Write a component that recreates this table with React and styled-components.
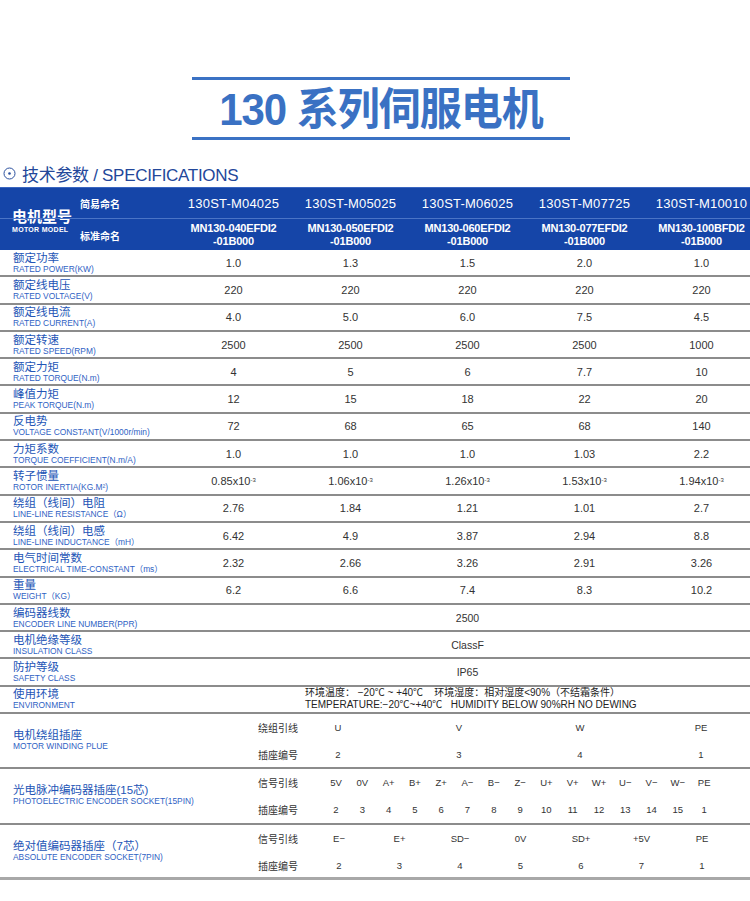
import React from 'react';
import styled, { createGlobalStyle } from 'styled-components';

const GlobalStyle = createGlobalStyle`
  html, body {
    margin: 0;
    padding: 0;
    background: #ffffff;
    overflow-x: hidden;
  }
  body {
    font-family: "Liberation Sans", "Noto Sans CJK SC", sans-serif;
    color: #333;
  }
`;

const models = [
  { short: '130ST-M04025', std: 'MN130-040EFDI2' },
  { short: '130ST-M05025', std: 'MN130-050EFDI2' },
  { short: '130ST-M06025', std: 'MN130-060EFDI2' },
  { short: '130ST-M07725', std: 'MN130-077EFDI2' },
  { short: '130ST-M10010', std: 'MN130-100BFDI2' },
];

const specs = [
  { cn: '额定功率', en: 'RATED POWER(KW)', v: ['1.0', '1.3', '1.5', '2.0', '1.0'] },
  { cn: '额定线电压', en: 'RATED VOLTAGE(V)', v: ['220', '220', '220', '220', '220'] },
  { cn: '额定线电流', en: 'RATED CURRENT(A)', v: ['4.0', '5.0', '6.0', '7.5', '4.5'] },
  { cn: '额定转速', en: 'RATED SPEED(RPM)', v: ['2500', '2500', '2500', '2500', '1000'] },
  { cn: '额定力矩', en: 'RATED TORQUE(N.m)', v: ['4', '5', '6', '7.7', '10'] },
  { cn: '峰值力矩', en: 'PEAK TORQUE(N.m)', v: ['12', '15', '18', '22', '20'] },
  { cn: '反电势', en: 'VOLTAGE CONSTANT(V/1000r/min)', v: ['72', '68', '65', '68', '140'] },
  { cn: '力矩系数', en: 'TORQUE COEFFICIENT(N.m/A)', v: ['1.0', '1.0', '1.0', '1.03', '2.2'] },
  { cn: '转子惯量', en: 'ROTOR INERTIA(KG.M²)', v: ['0.85', '1.06', '1.26', '1.53', '1.94'], exp: true },
  { cn: '绕组（线间）电阻', en: 'LINE-LINE RESISTANCE（Ω）', v: ['2.76', '1.84', '1.21', '1.01', '2.7'] },
  { cn: '绕组（线间）电感', en: 'LINE-LINE INDUCTANCE（mH）', v: ['6.42', '4.9', '3.87', '2.94', '8.8'] },
  { cn: '电气时间常数', en: 'ELECTRICAL TIME-CONSTANT（ms）', v: ['2.32', '2.66', '3.26', '2.91', '3.26'] },
  { cn: '重量', en: 'WEIGHT（KG）', v: ['6.2', '6.6', '7.4', '8.3', '10.2'] },
];

const merged = [
  { cn: '编码器线数', en: 'ENCODER LINE NUMBER(PPR)', v: '2500' },
  { cn: '电机绝缘等级', en: 'INSULATION CLASS', v: 'ClassF' },
  { cn: '防护等级', en: 'SAFETY CLASS', v: 'IP65' },
];

const sockets = [
  {
    cn: '电机绕组插座',
    en: 'MOTOR WINDING PLUE',
    sig: ['U', 'V', 'W', 'PE'],
    pin: ['2', '3', '4', '1'],
    pad: 13, w: 40, gap: 81,
  },
  {
    cn: '光电脉冲编码器插座(15芯)',
    en: 'PHOTOELECTRIC ENCODER SOCKET(15PIN)',
    sig: ['5V', '0V', 'A+', 'B+', 'Z+', 'A−', 'B−', 'Z−', 'U+', 'V+', 'W+', 'U−', 'V−', 'W−', 'PE'],
    pin: ['2', '3', '4', '5', '6', '7', '8', '9', '10', '11', '12', '13', '14', '15', '1'],
    pad: 18, w: 26, gap: 0.3,
  },
  {
    cn: '绝对值编码器插座（7芯）',
    en: 'ABSOLUTE ENCODER SOCKET(7PIN)',
    sig: ['E−', 'E+', 'SD−', '0V', 'SD+', '+5V', 'PE'],
    pin: ['2', '3', '4', '5', '6', '7', '1'],
    pad: 9, w: 50, gap: 10.5,
  },
];

const App = () => {
  return (
    <Page>
      <GlobalStyle />
      <TitleBox>
        <Title>130 系列伺服电机</Title>
      </TitleBox>

      <SpecHeading>
        <svg width="13" height="13" viewBox="0 0 13 13">
          <circle cx="6.5" cy="6.5" r="5.5" fill="none" stroke="#2a4f9e" strokeWidth="1" />
          <circle cx="6.5" cy="6.5" r="1.3" fill="#2a4f9e" />
        </svg>
        技术参数 / SPECIFICATIONS
      </SpecHeading>

      <Table>
        <Header>
          <ModelCell>
            <ModelCn>电机型号</ModelCn>
            <ModelEn>MOTOR MODEL</ModelEn>
          </ModelCell>
          <NameLabel $row={1}>简易命名</NameLabel>
          <NameLabel $row={2}>标准命名</NameLabel>
          {models.map((m, i) => (
            <ShortName key={m.short} style={{ gridColumn: i + 3 }}>{m.short}</ShortName>
          ))}
          {models.map((m, i) => (
            <StdName key={m.std} style={{ gridColumn: i + 3 }}>
              {m.std}
              <br />
              -01B000
            </StdName>
          ))}
          <HeaderDivider />
        </Header>

        {specs.map((s) => (
          <Row key={s.cn}>
            <Label>
              <Cn>{s.cn}</Cn>
              <En>{s.en}</En>
            </Label>
            {s.v.map((v, i) => (
              <Cell key={i}>
                {v}
                {s.exp && (
                  <>
                    x10<Sup>-3</Sup>
                  </>
                )}
              </Cell>
            ))}
          </Row>
        ))}

        {merged.map((s) => (
          <Row key={s.cn}>
            <Label>
              <Cn>{s.cn}</Cn>
              <En>{s.en}</En>
            </Label>
            <SpanCell>{s.v}</SpanCell>
          </Row>
        ))}

        <Row>
          <Label>
            <Cn>使用环境</Cn>
            <En>ENVIRONMENT</En>
          </Label>
          <EnvCell>
            <div>环境温度： −20℃ ~ +40℃&nbsp;&nbsp;&nbsp;&nbsp;环境湿度：相对湿度&lt;90%（不结霜条件）</div>
            <div>TEMPERATURE:−20℃~+40℃&nbsp;&nbsp;&nbsp;HUMIDITY BELOW 90%RH NO DEWING</div>
          </EnvCell>
        </Row>

        {sockets.map((s, idx) => (
          <SocketBlock key={s.cn} $last={idx === sockets.length - 1}>
            <SocketLabel>
              <Cn>{s.cn}</Cn>
              <En>{s.en}</En>
            </SocketLabel>
            <SubLabels>
              <SubLabel>{idx === 0 ? '绕组引线' : '信号引线'}</SubLabel>
              <SubLabel>插座编号</SubLabel>
            </SubLabels>
            <div>
              <ValueRow $n={s.sig.length} $pad={s.pad} $w={s.w} $gap={s.gap}>
                {s.sig.map((v, i) => <Pin key={i}>{v}</Pin>)}
              </ValueRow>
              <ValueRow $n={s.pin.length} $pad={s.pad} $w={s.w} $gap={s.gap}>
                {s.pin.map((v, i) => <Pin key={i}>{v}</Pin>)}
              </ValueRow>
            </div>
          </SocketBlock>
        ))}
      </Table>
    </Page>
  );
};

export default App;

const Page = styled.div`
  width: 750px;
  overflow: hidden;
  padding-top: 77px;
  padding-bottom: 20px;
`;

const TitleBox = styled.div`
  width: 378px;
  margin: 0 0 0 192px;
  border-top: 3px solid #3b72c4;
  border-bottom: 3px solid #3b72c4;
  height: 57px;
  display: flex;
  align-items: center;
  justify-content: center;
`;

const Title = styled.h1`
  margin: 0;
  font-size: 42px;
  font-weight: bold;
  color: #3a71c3;
  letter-spacing: -1px;
  line-height: 1;
  padding-top: 3px;
  transform: scaleY(1.06);
`;

const SpecHeading = styled.div`
  display: flex;
  align-items: center;
  gap: 6px;
  margin: 22px 0 0 3px;
  height: 22px;
  font-size: 17px;
  color: #23479a;
  letter-spacing: -0.3px;
`;

const Table = styled.div`
  width: 760px;
  margin-top: 3px;
`;

const Header = styled.div`
  position: relative;
  display: grid;
  grid-template-columns: 78px 97px repeat(5, 117px);
  grid-template-rows: 31px 31px;
  background: #1545a8;
  border-top: 1px solid #3a66c0;
  color: #ffffff;
`;

const HeaderDivider = styled.div`
  position: absolute;
  left: 0;
  right: 0;
  top: 30px;
  height: 1px;
  background: #4a74c6;
`;

const ModelCell = styled.div`
  grid-column: 1;
  grid-row: 1 / span 2;
  display: flex;
  flex-direction: column;
  justify-content: center;
  padding-left: 12px;
  padding-top: 2px;
  white-space: nowrap;
`;

const ModelCn = styled.div`
  font-size: 15px;
  font-weight: bold;
  line-height: 17px;
`;

const ModelEn = styled.div`
  font-size: 7px;
  font-weight: bold;
  letter-spacing: 0.3px;
  margin-top: 1px;
`;

const NameLabel = styled.div`
  grid-column: 2;
  grid-row: ${(p) => p.$row};
  display: flex;
  align-items: center;
  padding-left: 2px;
  font-size: 10px;
  font-weight: bold;
  padding-top: ${(p) => (p.$row === 2 ? '2px' : '0')};
`;

const ShortName = styled.div`
  grid-row: 1;
  display: flex;
  align-items: center;
  justify-content: center;
  font-size: 13px;
  letter-spacing: 0.2px;
`;

const StdName = styled.div`
  grid-row: 2;
  display: flex;
  align-items: center;
  justify-content: center;
  text-align: center;
  font-size: 11px;
  font-weight: bold;
  line-height: 13px;
  letter-spacing: -0.2px;
`;

const Row = styled.div`
  display: grid;
  grid-template-columns: 175px repeat(5, 117px);
  height: 27.3px;
  box-sizing: border-box;
  border-bottom: 2px solid #8c8c8c;
`;

const Label = styled.div`
  display: flex;
  flex-direction: column;
  justify-content: center;
  padding-left: 13px;
  white-space: nowrap;
`;

const Cn = styled.div`
  font-size: 11.5px;
  line-height: 12px;
  color: #2355b6;
`;

const En = styled.div`
  font-size: 8.4px;
  line-height: 10px;
  color: #2f62c4;
`;

const Cell = styled.div`
  display: flex;
  align-items: center;
  justify-content: center;
  font-size: 11px;
  color: #333;
`;

const Sup = styled.sup`
  font-size: 6px;
  position: relative;
  top: -1px;
`;

const SpanCell = styled(Cell)`
  grid-column: 2 / span 5;
  font-size: 10.5px;
`;

const EnvCell = styled.div`
  grid-column: 2 / span 5;
  padding-left: 130px;
  display: flex;
  flex-direction: column;
  justify-content: center;
  font-size: 10px;
  line-height: 12px;
  color: #222;
  white-space: nowrap;
`;

const SocketBlock = styled.div`
  display: grid;
  grid-template-columns: 245px 60px 1fr;
  height: 55.3px;
  box-sizing: border-box;
  border-bottom: ${(p) => (p.$last ? '3px solid #a8a8a8' : '2px solid #8c8c8c')};
`;

const SocketLabel = styled(Label)`
  padding-bottom: 2px;
`;

const SubLabels = styled.div`
  display: flex;
  flex-direction: column;
`;

const SubLabel = styled.div`
  height: 27px;
  display: flex;
  align-items: center;
  padding-left: 13px;
  font-size: 10px;
  color: #333;
  white-space: nowrap;
`;

const ValueRow = styled.div`
  height: 27px;
  display: grid;
  grid-template-columns: repeat(${(p) => p.$n}, ${(p) => p.$w}px);
  column-gap: ${(p) => p.$gap}px;
  padding-left: ${(p) => p.$pad}px;
`;

const Pin = styled.div`
  display: flex;
  align-items: center;
  justify-content: center;
  font-size: 9.5px;
  color: #333;
  white-space: nowrap;
`;
